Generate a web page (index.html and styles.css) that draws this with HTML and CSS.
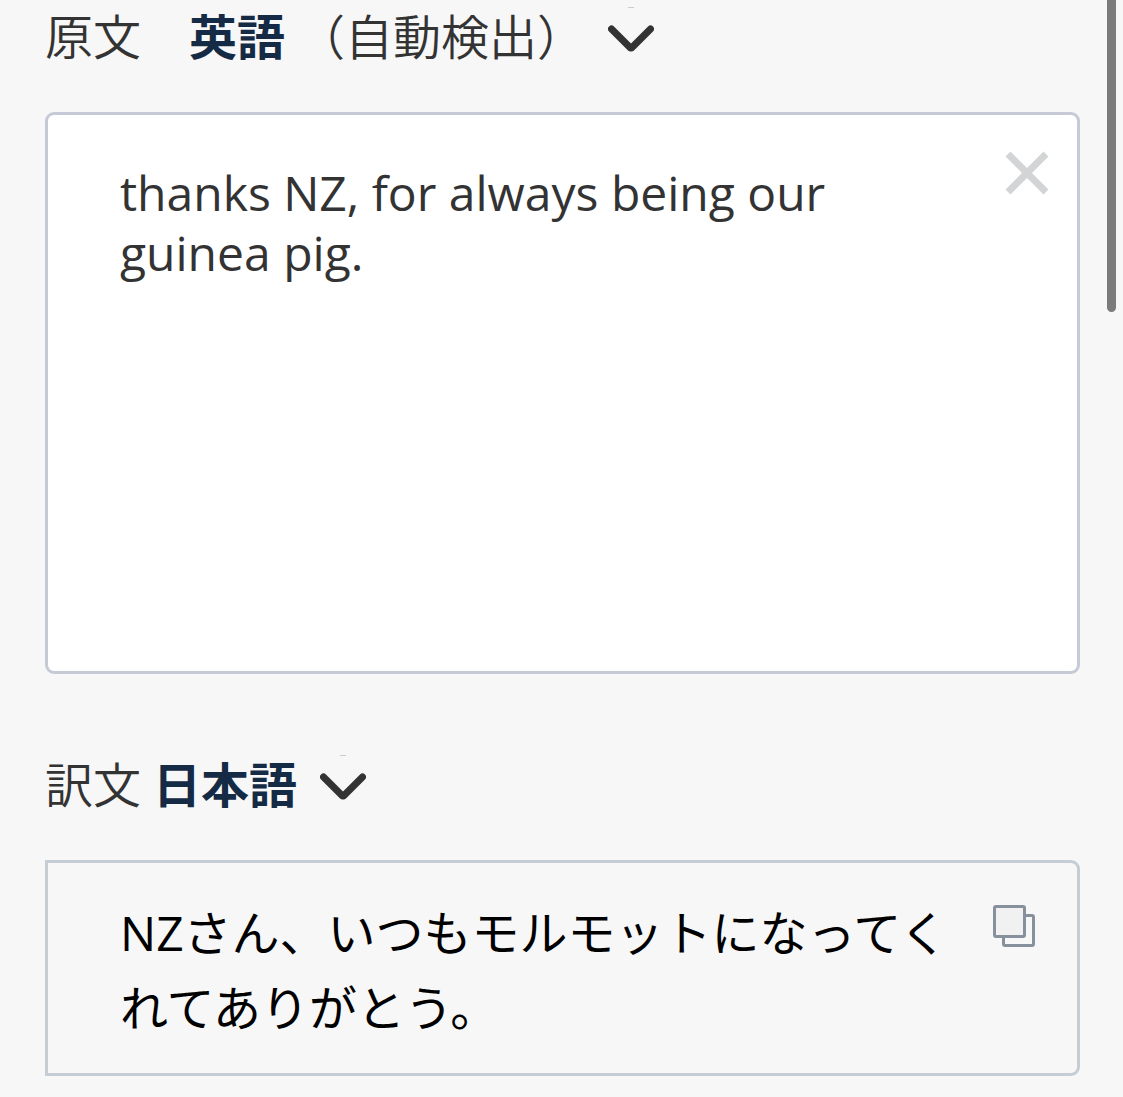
FILE: index.html
```html
<!DOCTYPE html>
<html lang="ja">
<head>
<meta charset="utf-8">
<meta name="viewport" content="width=device-width, initial-scale=1">
<title>翻訳</title>
<link rel="stylesheet" href="styles.css">
</head>
<body>
<main class="translator">
  <section class="panel">
    <div class="lang-bar">
      <label class="lang-label" for="source">原文　</label>
      <button class="lang-button" type="button" aria-haspopup="listbox">
        <span class="lang-name"><strong>英語</strong><span>（自動検出）</span></span>
        <svg class="chevron" viewBox="0 0 46 68" aria-hidden="true">
          <path class="chevron-tick" d="M20 7.500H26"/>
          <path class="chevron-line" d="M3.500 29L22.500 48H23.500L42.500 29"/>
        </svg>
      </button>
    </div>
    <div class="source-box">
      <textarea class="source-text" id="source" spellcheck="false">thanks NZ, for always being our guinea pig.</textarea>
      <button class="icon-button clear" type="button" aria-label="クリア">
        <svg class="icon" viewBox="0 0 44 44" aria-hidden="true">
          <path class="clear-line" d="M3 3L41 41M41 3L3 41"/>
        </svg>
      </button>
    </div>
  </section>
  <section class="panel">
    <div class="lang-bar">
      <span class="lang-label">訳文</span>
      <button class="lang-button target" type="button" aria-haspopup="listbox">
        <strong>日本語</strong>
        <svg class="chevron" viewBox="0 0 46 68" aria-hidden="true">
          <path class="chevron-tick" d="M20 7.500H26"/>
          <path class="chevron-line" d="M3.500 29L22.500 48H23.500L42.500 29"/>
        </svg>
      </button>
    </div>
    <div class="result-box">
      <p class="result-text">NZさん、いつもモルモットになってくれてありがとう。</p>
      <button class="icon-button" type="button" aria-label="コピー">
        <svg class="icon" viewBox="0 0 44 44" aria-hidden="true">
          <rect class="copy-back" x="11.500" y="11.500" width="30" height="30" rx="1.500"/>
          <rect class="copy-front" x="2.500" y="2.500" width="30" height="30" rx="1.500"/>
        </svg>
      </button>
    </div>
  </section>
</main>
<div class="scroll-thumb" aria-hidden="true"></div>
</body>
</html>
```
FILE: styles.css
```css
* {
  box-sizing: border-box;
}

body {
  margin: 0;
  background: #f7f7f7;
  color: #333;
  font: 400 48px/60px "Open Sans", "Noto Sans CJK JP", sans-serif;
}

.translator {
  display: flex;
  flex-direction: column;
  gap: 74px;
  padding: 0 43px 20px 45px;
}

.panel {
  display: flex;
  flex-direction: column;
  gap: 44px;
}

.lang-bar {
  display: flex;
  align-items: center;
  height: 68px;
  font-family: "Noto Sans CJK JP", sans-serif;
  font-weight: 350;
}

.lang-label {
  white-space: pre;
}

.lang-button {
  display: flex;
  align-items: center;
  gap: 23px;
  padding: 0;
  border: 0;
  background: none;
  color: inherit;
  font: inherit;
}

.lang-button.target {
  margin-left: 12px;
}

.lang-name {
  display: flex;
  gap: 12px;
}

.lang-button strong {
  color: #152a45;
  font-weight: 700;
}

.chevron {
  width: 46px;
  height: 68px;
  fill: none;
}

.chevron-line {
  stroke: #333;
  stroke-width: 7;
  stroke-linecap: round;
  stroke-linejoin: round;
}

.chevron-tick {
  stroke: #ccc;
  stroke-width: 1;
}

.source-box,
.result-box {
  display: flex;
  align-items: flex-start;
  justify-content: space-between;
  border: 3px solid #c6cad6;
  border-radius: 9px;
}

.source-box {
  min-height: 562px;
  padding-right: 28px;
  background: #fff;
}

.source-text {
  flex: 1;
  align-self: stretch;
  min-width: 0;
  padding: 48px 32px 0 72px;
  border: 0;
  outline: 0;
  background: none;
  color: inherit;
  font: inherit;
  resize: none;
  overflow: hidden;
}

.icon-button {
  flex: none;
  width: 44px;
  height: 44px;
  padding: 0;
  border: 0;
  background: none;
}

.clear {
  margin-top: 36px;
}

.icon {
  display: block;
  width: 44px;
  height: 44px;
  fill: none;
}

.clear-line {
  stroke: #d2d4d5;
  stroke-width: 7;
}

.copy-back,
.copy-front {
  stroke: #87919d;
  stroke-width: 3;
}

.copy-front {
  fill: #f2f1f2;
}

.result-box {
  padding: 32px 41px 28px 72px;
  border-color: #c6ccd4;
  border-radius: 0 9px 9px 0;
}

.result-box .icon-button {
  margin-top: 9px;
}

.result-text {
  flex: 1;
  margin: 0;
  padding-right: 32px;
  color: #000;
  line-height: 75px;
}

.scroll-thumb {
  position: fixed;
  top: -8px;
  right: 7px;
  width: 9px;
  height: 320px;
  border-radius: 5px;
  background: #7b7b7b;
}
```
